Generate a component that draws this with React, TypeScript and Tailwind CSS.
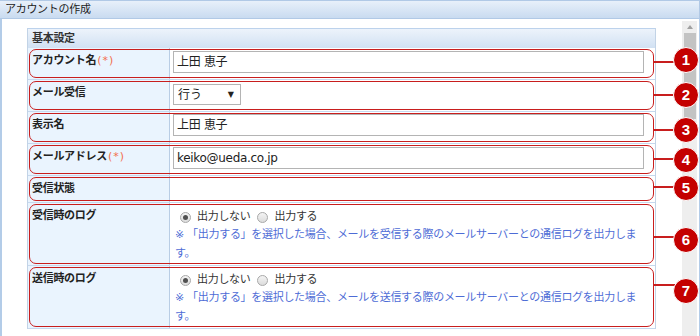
const jp = "font-['DejaVu_Sans','Noto_Sans_CJK_JP',sans-serif]"

type Row = {
  label: string
  required?: boolean
  h: string
  circleTop: string
  lineTop: string
  n: number
  kind: 'input' | 'select' | 'empty' | 'log'
  value?: string
  inputTop?: string
  note?: string
}

const rows: Row[] = [
  { label: 'アカウント名', required: true, h: 'h-[32px]', circleTop: 'top-[-1px]', lineTop: 'top-[13px]', n: 1, kind: 'input', value: '上田 恵子', inputTop: 'mt-[3px]' },
  { label: 'メール受信', h: 'h-[32px]', circleTop: 'top-[2px]', lineTop: 'top-[14px]', n: 2, kind: 'select' },
  { label: '表示名', h: 'h-[32px]', circleTop: 'top-[5px]', lineTop: 'top-[17px]', n: 3, kind: 'input', value: '上田 恵子', inputTop: 'mt-[2px]' },
  { label: 'メールアドレス', required: true, h: 'h-[32px]', circleTop: 'top-[3px]', lineTop: 'top-[14px]', n: 4, kind: 'input', value: 'keiko@ueda.co.jp', inputTop: 'mt-[3px]' },
  { label: '受信状態', h: 'h-[27px]', circleTop: 'top-[-1px]', lineTop: 'top-[10px]', n: 5, kind: 'empty' },
  {
    label: '受信時のログ', h: 'h-[63px]', circleTop: 'top-[24px]', lineTop: 'top-[33px]', n: 6, kind: 'log',
    note: '※ 「出力する」を選択した場合、メールを受信する際のメールサーバーとの通信ログを出力します。',
  },
  {
    label: '送信時のログ', h: 'h-[63px]', circleTop: 'top-[12px]', lineTop: 'top-[18px]', n: 7, kind: 'log',
    note: '※ 「出力する」を選択した場合、メールを送信する際のメールサーバーとの通信ログを出力します。',
  },
]

function Radio({ checked }: { checked?: boolean }) {
  return (
    <span className="w-[11px] h-[11px] rounded-full border border-[#a8a8a8] bg-gradient-to-b from-[#f4f4f4] to-[#dcdcdc] flex items-center justify-center">
      {checked && <span className="w-[5px] h-[5px] rounded-full bg-[#505050]" />}
    </span>
  )
}

function Value({ row }: { row: Row }) {
  if (row.kind === 'input') {
    return (
      <div className={`${row.inputTop} ml-[3px] w-[471px] h-[22px] border border-[#b4b4b4] bg-white flex items-center pl-[3px] text-[12px] text-[#222] tracking-[-0.3px]`}>
        {row.value}
      </div>
    )
  }
  if (row.kind === 'select') {
    return (
      <div className="mt-[4px] ml-[3px] w-[68px] h-[21px] border border-[#b4b4b4] bg-white flex items-center justify-between pl-[4px] pr-[6px] text-[12px] text-[#222]">
        <span>行う</span>
        <span className="text-[8px] leading-none">▼</span>
      </div>
    )
  }
  if (row.kind === 'log') {
    return (
      <div className="pl-[5px] pt-[6px]">
        <div className="h-[16px] flex items-center pl-[5px] text-[11px] leading-[14px] text-[#333] tracking-[-0.3px]">
          <Radio checked />
          <span className="ml-[6px]">出力しない</span>
          <span className="ml-[6px]"><Radio /></span>
          <span className="ml-[7px]">出力する</span>
        </div>
        <div className="w-[468px] text-[11px] leading-[19px] text-[#4e6cd6] tracking-[-0.3px]">
          {row.note}
        </div>
      </div>
    )
  }
  return null
}

export default function App() {
  return (
    <div className={`w-[700px] h-[336px] overflow-hidden bg-white ${jp}`}>
      <div className="h-[19px] border-t border-b border-r border-[#b1c9e6] bg-gradient-to-b from-[#e8f0fa] to-[#c9dbf0] pl-[5px] text-[11px] leading-[17px] text-[#222] tracking-[-0.3px]">
        アカウントの作成
      </div>
      <div className="flex h-[317px] border-l-2 border-r border-[#b3cce8]">
        <div className="flex-1 pl-[25px] pt-[9px]">
          <div className="w-[629px] border-l border-r border-[#c2d3e6]">
            <div className="h-[20px] border-t border-[#bcd2ec] bg-gradient-to-b from-[#edf3fb] to-[#d1e1f3] pl-[4px] text-[11px] leading-[19px] font-bold text-[#333] tracking-[-0.3px]">
              基本設定
            </div>
            {rows.map(row => (
              <div key={row.n} className={`relative grid grid-cols-[141px_1fr] ${row.h} border-b border-[#c6d8ee]`}>
                <div className="bg-[#eaf4fe] pl-[4px] pt-[6px] text-[11px] leading-[14px] font-bold text-[#222] tracking-[-0.3px]">
                  {row.label}
                  {row.required && <span className="text-[#f2704e] font-normal tracking-[1px] ml-[1px]">(*)</span>}
                </div>
                <div className="border-l border-[#b9cde5] bg-white">
                  <Value row={row} />
                </div>
                <div className="absolute top-[1px] left-[1px] right-[1px] bottom-[1px] border-[1.5px] border-[#c81e1e] rounded-[7px] pointer-events-none z-10" />
                <div className={`absolute ${row.lineTop} left-[626px] w-[30px] h-[2px] bg-[#c81e1e] z-20`} />
                <div className={`absolute ${row.circleTop} left-[645px] w-[26px] h-[26px] rounded-full bg-[#c40000] border border-white flex items-center justify-center text-white text-[15px] font-bold font-['Liberation_Sans',sans-serif] z-30`}>
                  {row.n}
                </div>
              </div>
            ))}
          </div>
        </div>
        <div className="w-[15px] mr-[2px] mt-[2px] bg-[#eeeeee] flex flex-col items-center">
          <div className="h-[12px] flex items-center justify-center">
            <span className="w-0 h-0 border-l-[3px] border-r-[3px] border-b-[4px] border-l-transparent border-r-transparent border-b-[#a0a0a0]" />
          </div>
          <div className="w-[12px] h-[86px] bg-[#c3c3c3]" />
        </div>
      </div>
    </div>
  )
}
